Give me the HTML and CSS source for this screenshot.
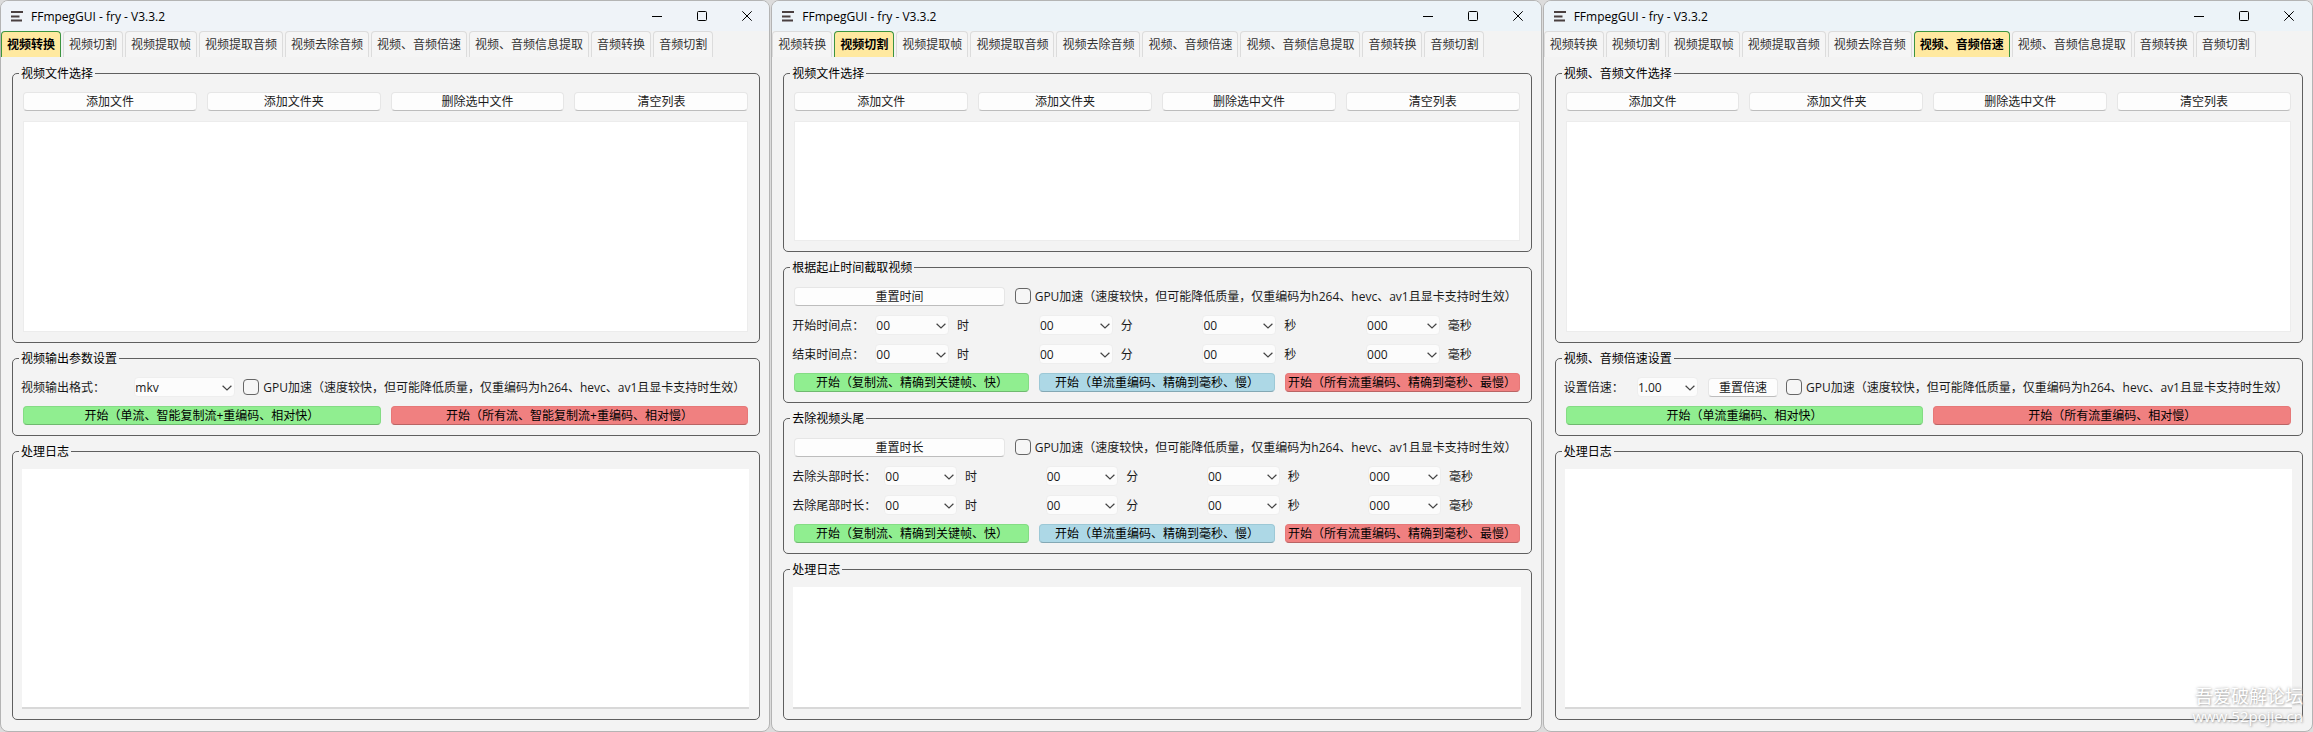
FILE: index.html
```
<!DOCTYPE html>
<html lang="zh-CN">
<head>
<meta charset="utf-8">
<title>FFmpegGUI - fry - V3.3.2</title>
<link rel="stylesheet" href="styles.css">
</head>
<body>
<svg class="defs" aria-hidden="true">
  <symbol id="i-app" viewBox="0 0 12 11"><path d="M0 1h12M0 5.5h8.500M0 9.500h11" stroke="#4a4040" stroke-width="1.800" fill="none"/></symbol>
  <symbol id="i-min" viewBox="0 0 10 10"><path d="M0 5.500h10" stroke="#000" fill="none"/></symbol>
  <symbol id="i-max" viewBox="0 0 10 10"><rect x=".5" y=".5" width="9" height="9" rx="1" stroke="#000" fill="none"/></symbol>
  <symbol id="i-close" viewBox="0 0 10 10"><path d="M.3.3l9.400 9.400M9.700.3L.3 9.700" stroke="#000" fill="none"/></symbol>
  <symbol id="i-down" viewBox="0 0 10 6"><path d="M.6 .8l4.400 4.200 4.400-4.200" stroke="#444" stroke-width="1.200" fill="none"/></symbol>
</svg>
<div class="desktop">

<section class="window">
  <header class="titlebar">
    <svg class="app-icon"><use href="#i-app"/></svg>
    <h1 class="title">FFmpegGUI - fry - V3.3.2</h1>
    <div class="controls">
      <button aria-label="最小化"><svg><use href="#i-min"/></svg></button>
      <button aria-label="最大化"><svg><use href="#i-max"/></svg></button>
      <button aria-label="关闭"><svg><use href="#i-close"/></svg></button>
    </div>
  </header>
  <nav class="tabs">
    <button class="tab active">视频转换</button><button class="tab">视频切割</button><button class="tab">视频提取帧</button><button class="tab">视频提取音频</button><button class="tab">视频去除音频</button><button class="tab">视频、音频倍速</button><button class="tab">视频、音频信息提取</button><button class="tab">音频转换</button><button class="tab">音频切割</button>
  </nav>
  <main class="page">
    <fieldset class="group grow">
      <legend>视频文件选择</legend>
      <div class="buttons files">
        <button class="btn">添加文件</button><button class="btn">添加文件夹</button><button class="btn">删除选中文件</button><button class="btn">清空列表</button>
      </div>
      <ul class="file-list"></ul>
    </fieldset>
    <fieldset class="group">
      <legend>视频输出参数设置</legend>
      <div class="row">
        <div class="lead">
          <label class="lead-label" for="fmt">视频输出格式：</label>
          <div class="combo fmt"><select id="fmt"><option>mkv</option></select><svg><use href="#i-down"/></svg></div>
        </div>
        <label class="check"><input type="checkbox">GPU加速（速度较快，但可能降低质量，仅重编码为h264、hevc、av1且显卡支持时生效）</label>
      </div>
      <div class="buttons">
        <button class="btn green">开始（单流、智能复制流+重编码、相对快）</button><button class="btn red">开始（所有流、智能复制流+重编码、相对慢）</button>
      </div>
    </fieldset>
    <fieldset class="group grow log">
      <legend>处理日志</legend>
      <textarea class="log-text" aria-label="处理日志" readonly></textarea>
    </fieldset>
  </main>
</section>

<section class="window">
  <header class="titlebar tinted">
    <svg class="app-icon"><use href="#i-app"/></svg>
    <h1 class="title">FFmpegGUI - fry - V3.3.2</h1>
    <div class="controls">
      <button aria-label="最小化"><svg><use href="#i-min"/></svg></button>
      <button aria-label="最大化"><svg><use href="#i-max"/></svg></button>
      <button aria-label="关闭"><svg><use href="#i-close"/></svg></button>
    </div>
  </header>
  <nav class="tabs">
    <button class="tab">视频转换</button><button class="tab active">视频切割</button><button class="tab">视频提取帧</button><button class="tab">视频提取音频</button><button class="tab">视频去除音频</button><button class="tab">视频、音频倍速</button><button class="tab">视频、音频信息提取</button><button class="tab">音频转换</button><button class="tab">音频切割</button>
  </nav>
  <main class="page">
    <fieldset class="group share-files">
      <legend>视频文件选择</legend>
      <div class="buttons files">
        <button class="btn">添加文件</button><button class="btn">添加文件夹</button><button class="btn">删除选中文件</button><button class="btn">清空列表</button>
      </div>
      <ul class="file-list"></ul>
    </fieldset>
    <fieldset class="group">
      <legend>根据起止时间截取视频</legend>
      <div class="row">
        <div class="lead"><button class="btn wide">重置时间</button></div>
        <label class="check"><input type="checkbox">GPU加速（速度较快，但可能降低质量，仅重编码为h264、hevc、av1且显卡支持时生效）</label>
      </div>
      <div class="times">
        <span class="time-label">开始时间点：</span>
        <div class="combo"><select id="sh"><option>00</option></select><svg><use href="#i-down"/></svg></div><label for="sh">时</label>
        <div class="combo"><select id="sm"><option>00</option></select><svg><use href="#i-down"/></svg></div><label for="sm">分</label>
        <div class="combo"><select id="ss"><option>00</option></select><svg><use href="#i-down"/></svg></div><label for="ss">秒</label>
        <div class="combo"><select id="sx"><option>000</option></select><svg><use href="#i-down"/></svg></div><label for="sx">毫秒</label>
        <span class="time-label">结束时间点：</span>
        <div class="combo"><select id="eh"><option>00</option></select><svg><use href="#i-down"/></svg></div><label for="eh">时</label>
        <div class="combo"><select id="em"><option>00</option></select><svg><use href="#i-down"/></svg></div><label for="em">分</label>
        <div class="combo"><select id="es"><option>00</option></select><svg><use href="#i-down"/></svg></div><label for="es">秒</label>
        <div class="combo"><select id="ex"><option>000</option></select><svg><use href="#i-down"/></svg></div><label for="ex">毫秒</label>
      </div>
      <div class="buttons">
        <button class="btn green">开始（复制流、精确到关键帧、快）</button><button class="btn blue">开始（单流重编码、精确到毫秒、慢）</button><button class="btn red">开始（所有流重编码、精确到毫秒、最慢）</button>
      </div>
    </fieldset>
    <fieldset class="group">
      <legend>去除视频头尾</legend>
      <div class="row">
        <div class="lead"><button class="btn wide">重置时长</button></div>
        <label class="check"><input type="checkbox">GPU加速（速度较快，但可能降低质量，仅重编码为h264、hevc、av1且显卡支持时生效）</label>
      </div>
      <div class="times">
        <span class="time-label">去除头部时长：</span>
        <div class="combo"><select id="hh"><option>00</option></select><svg><use href="#i-down"/></svg></div><label for="hh">时</label>
        <div class="combo"><select id="hm"><option>00</option></select><svg><use href="#i-down"/></svg></div><label for="hm">分</label>
        <div class="combo"><select id="hs"><option>00</option></select><svg><use href="#i-down"/></svg></div><label for="hs">秒</label>
        <div class="combo"><select id="hx"><option>000</option></select><svg><use href="#i-down"/></svg></div><label for="hx">毫秒</label>
        <span class="time-label">去除尾部时长：</span>
        <div class="combo"><select id="th"><option>00</option></select><svg><use href="#i-down"/></svg></div><label for="th">时</label>
        <div class="combo"><select id="tm"><option>00</option></select><svg><use href="#i-down"/></svg></div><label for="tm">分</label>
        <div class="combo"><select id="ts"><option>00</option></select><svg><use href="#i-down"/></svg></div><label for="ts">秒</label>
        <div class="combo"><select id="tx"><option>000</option></select><svg><use href="#i-down"/></svg></div><label for="tx">毫秒</label>
      </div>
      <div class="buttons">
        <button class="btn green">开始（复制流、精确到关键帧、快）</button><button class="btn blue">开始（单流重编码、精确到毫秒、慢）</button><button class="btn red">开始（所有流重编码、精确到毫秒、最慢）</button>
      </div>
    </fieldset>
    <fieldset class="group share-log log">
      <legend>处理日志</legend>
      <textarea class="log-text" aria-label="处理日志" readonly></textarea>
    </fieldset>
  </main>
</section>

<section class="window">
  <header class="titlebar tinted">
    <svg class="app-icon"><use href="#i-app"/></svg>
    <h1 class="title">FFmpegGUI - fry - V3.3.2</h1>
    <div class="controls">
      <button aria-label="最小化"><svg><use href="#i-min"/></svg></button>
      <button aria-label="最大化"><svg><use href="#i-max"/></svg></button>
      <button aria-label="关闭"><svg><use href="#i-close"/></svg></button>
    </div>
  </header>
  <nav class="tabs">
    <button class="tab">视频转换</button><button class="tab">视频切割</button><button class="tab">视频提取帧</button><button class="tab">视频提取音频</button><button class="tab">视频去除音频</button><button class="tab active">视频、音频倍速</button><button class="tab">视频、音频信息提取</button><button class="tab">音频转换</button><button class="tab">音频切割</button>
  </nav>
  <main class="page">
    <fieldset class="group grow">
      <legend>视频、音频文件选择</legend>
      <div class="buttons files">
        <button class="btn">添加文件</button><button class="btn">添加文件夹</button><button class="btn">删除选中文件</button><button class="btn">清空列表</button>
      </div>
      <ul class="file-list"></ul>
    </fieldset>
    <fieldset class="group">
      <legend>视频、音频倍速设置</legend>
      <div class="row">
        <div class="lead">
          <label class="lead-label" for="speed">设置倍速：</label>
          <div class="combo speed"><select id="speed"><option>1.00</option></select><svg><use href="#i-down"/></svg></div>
          <button class="btn reset">重置倍速</button>
        </div>
        <label class="check"><input type="checkbox">GPU加速（速度较快，但可能降低质量，仅重编码为h264、hevc、av1且显卡支持时生效）</label>
      </div>
      <div class="buttons">
        <button class="btn green">开始（单流重编码、相对快）</button><button class="btn red">开始（所有流重编码、相对慢）</button>
      </div>
    </fieldset>
    <fieldset class="group grow log">
      <legend>处理日志</legend>
      <textarea class="log-text" aria-label="处理日志" readonly></textarea>
    </fieldset>
  </main>
</section>

</div>
<div class="watermark"><span class="wm-name">吾爱破解论坛</span><span class="wm-url">www.52pojie.cn</span></div>
</body>
</html>
```
FILE: styles.css
```
* { box-sizing: border-box; }

body {
  margin: 0;
  background: #dcdcdc;
  color: #1a1a1a;
  font: 12px/17px "Open Sans", "Noto Sans CJK SC", sans-serif;
}

button, select, textarea, input { font: inherit; color: inherit; }

.defs { display: none; }

.desktop {
  display: grid;
  grid-template-columns: repeat(3, 1fr);
  gap: 1px;
  height: 100vh;
  min-height: 700px;
}

.window {
  display: flex;
  flex-direction: column;
  min-width: 0;
  border: 1px solid #b4b4b4;
  border-radius: 8px;
  background: #f3f3f3;
  overflow: hidden;
}

.titlebar {
  display: flex;
  align-items: center;
  height: 30px;
  padding: 0 0 0 10px;
  background: #eff3f8;
}
.tinted { background: #ecf3f8; }
.app-icon { width: 12px; height: 11px; margin-right: 8px; }
.title { margin: 0; font-size: 12px; font-weight: 400; color: #000; }
.controls { display: flex; margin-left: auto; }
.controls button {
  display: grid;
  place-items: center;
  width: 45px;
  height: 28px;
  padding: 0;
  border: 0;
  background: none;
}
.controls svg { width: 10px; height: 10px; }

.tabs { display: flex; gap: 2px; }
.tab {
  height: 26px;
  padding: 0 5px;
  border: 1px solid #dcdcdc;
  border-bottom: 0;
  border-radius: 4px 4px 0 0;
  background: #f5f5f5;
  color: #333;
  white-space: nowrap;
}
.tab.active {
  border-color: #3c9440;
  background: #ffe9a0;
  color: #000;
  font-weight: 700;
}

.page {
  display: flex;
  flex: 1;
  flex-direction: column;
  gap: 7px;
  min-height: 0;
  padding: 8px 9px 11px 11px;
}

.group {
  display: flex;
  flex-direction: column;
  gap: 9px;
  min-width: 0;
  margin: 0;
  padding: 10px 9px 10px 8px;
  border: 1px solid #5f5f5f;
  border-radius: 5px;
}
.grow { flex: 1 1 0; }
.share-files { flex: 6 1 0; }
.share-log { flex: 5 1 0; }
.group.log { padding-top: 9px; }
legend { margin-left: -2px; padding: 0 2px; color: #000; }

.buttons {
  display: grid;
  grid-auto-flow: column;
  grid-auto-columns: minmax(0, 1fr);
  gap: 10px;
  padding: 0 2px;
}
.files { margin-bottom: 1px; }

.btn {
  height: 19px;
  padding: 0;
  border: 1px solid #e6e6e6;
  border-bottom-color: #bdbdbd;
  border-radius: 4px;
  background: #fdfdfd;
  line-height: 17px;
  white-space: nowrap;
}
.green { border-color: #84dc84; border-bottom-color: #6fb96f; background: #90ee90; color: #000; }
.red { border-color: #e67878; border-bottom-color: #b96464; background: #f08080; color: #000; }
.blue { border-color: #9cc8d6; border-bottom-color: #84a8b4; background: #add8e6; color: #000; }

.file-list {
  flex: 1;
  margin: 0 2px;
  padding: 0;
  border: 1px solid #ececec;
  background: #fff;
}
.log-text {
  flex: 1;
  min-height: 0;
  height: 0;
  margin: 0 1px;
  border: 0;
  border-bottom: 2px solid #d8d8d8;
  background: #fff;
  resize: none;
  outline: 0;
}

.row {
  display: flex;
  align-items: center;
  gap: 8px;
  height: 20px;
}
.lead {
  display: flex;
  flex: 1;
  align-items: center;
  gap: 10px;
  min-width: 0;
}
.lead-label { flex: 1; white-space: nowrap; }
.fmt { width: 101px; }
.speed { width: 61px; }
.reset { width: 70px; }
.wide { flex: 1; margin: 0 2px; }

.check {
  display: flex;
  flex: 0 0 507px;
  align-items: center;
  gap: 4px;
  white-space: nowrap;
}
.check input {
  flex: none;
  appearance: none;
  width: 16px;
  height: 16px;
  margin: 0;
  border: 1px solid #666;
  border-radius: 4px;
  background: #f6f6f6;
}

.combo { position: relative; display: grid; }
.combo select {
  appearance: none;
  width: 100%;
  height: 20px;
  padding: 0 16px 0 0;
  border: 1px solid #eee;
  border-radius: 4px;
  background: #fcfcfc;
  line-height: 17px;
}
.combo svg {
  position: absolute;
  top: 8px;
  right: 3px;
  width: 10px;
  height: 6px;
  pointer-events: none;
}

.times {
  display: grid;
  grid-template-columns: minmax(75px, auto) repeat(8, minmax(0, 1fr));
  align-items: center;
  gap: 9px 8px;
}

.watermark {
  position: absolute;
  right: 10px;
  bottom: 6px;
  display: flex;
  flex-direction: column;
  align-items: flex-end;
  color: #fff;
  font-size: 18px;
  line-height: 20px;
  text-shadow: 0 0 3px #aaa, 1px 1px 2px #bbb;
}
.wm-url { font-size: 15px; }
```
